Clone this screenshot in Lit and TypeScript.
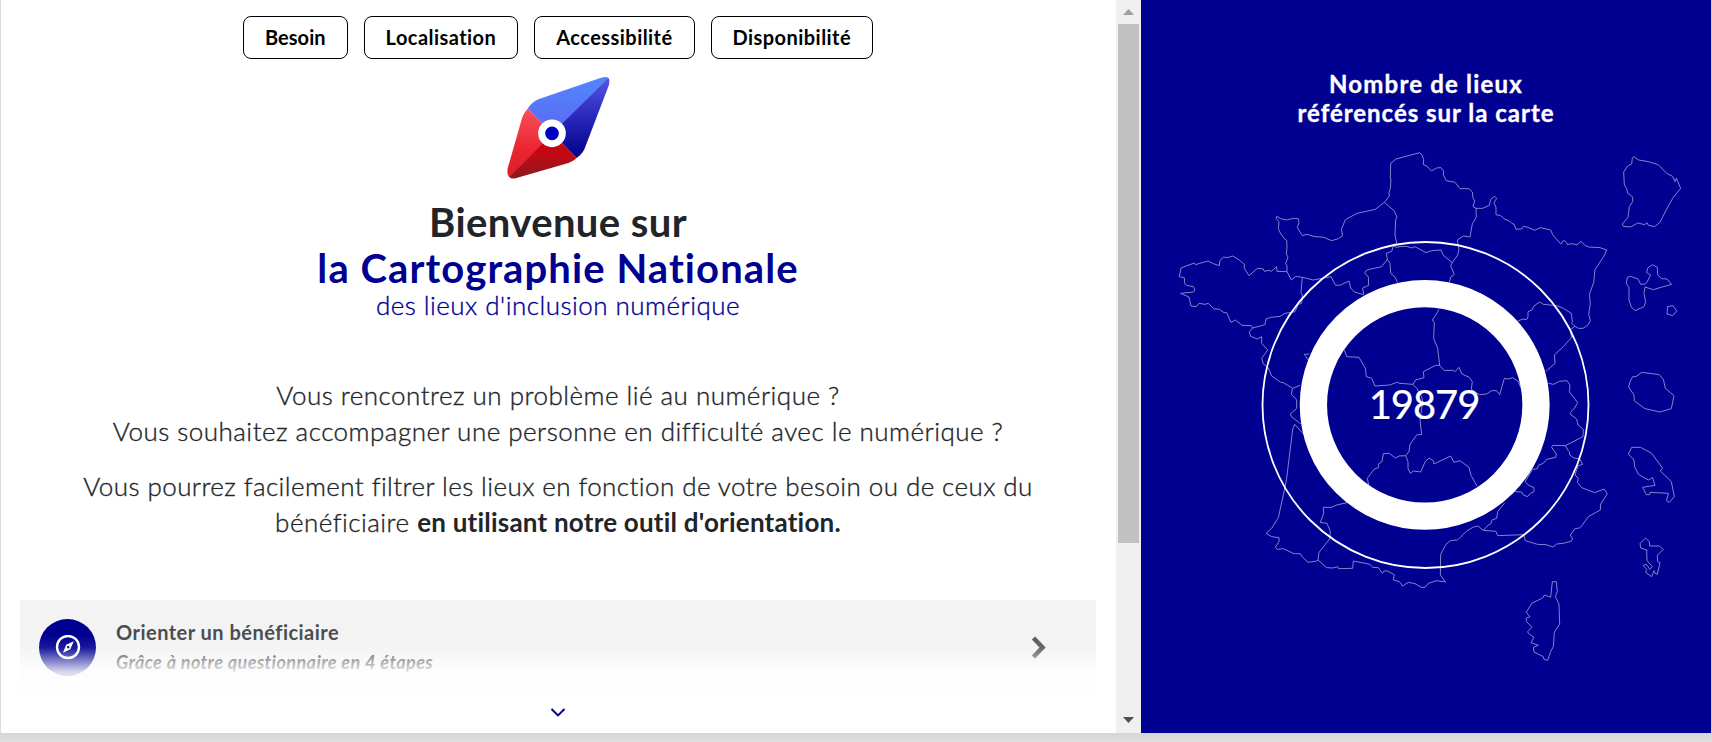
import { LitElement, html, svg, css } from "lit";
import { customElement } from "lit/decorators.js";

const FILTERS = ["Besoin", "Localisation", "Accessibilité", "Disponibilité"];

/* Outlines share a 1/3 px unit; each sheet has its own origin. */
const SHEETS = [
  { dx: 0, dy: 0, d: [
    "M411,425 411,408 407,400 414,382 409,372 411,352 410,331 402,325 391,309 385,296 387,275 379,266 380,259 392,266 410,270 430,265 445,266 447,278 442,293 457,317 471,313 490,319 522,322 545,332 565,326 578,317 574,299 586,269 621,250 676,238 703,217 718,198 717,188 721,175 723,148 721,148 722,100 738,87 809,68",
    "M411,425 381,424 380,410 364,424 357,421 343,424 340,417 322,415 297,437 283,415 283,403 269,391 248,378 232,383 220,381 210,392 208,407 190,401 174,393 136,404 133,399 93,414 88,440 104,444 103,459 110,466 130,470 135,480 130,486 92,490 117,501 123,528 139,530 147,520 165,523 175,520 191,536 208,538 222,548 230,548 243,577 256,570 276,586 304,587 308,594 298,605 302,619 322,627 335,620 335,640 353,660 335,685 340,702 354,712 365,738 392,757 400,758 428,775 450,766",
    "M308,594 345,584 348,567 362,562 390,559 405,550 435,545 445,523 455,520 457,495 453,488 457,442 438,439 424,450 411,425",
    "M457,442 490,450 543,440 557,466 572,465 597,453 602,474 613,486 634,492 641,494 638,474 656,466 655,441 644,429 650,420 695,410 712,388 709,370 725,364 730,348 740,340 735,315 737,270 741,262 733,243 703,217",
    "M712,388 720,400 722,430 735,441 743,458 M730,348 740,352 750,350 M478,672 463,673 475,690",
    "M428,775 424,792 440,810 440,835 421,852 424,860 453,882",
  ] },
  { dx: 750, dy: 0, d: [
    "M59,68 66,75 71,88 70,104 80,108 94,123 110,114 123,113 131,123 130,135 139,152 165,157 180,176 207,176 217,186 219,204 224,213 219,230 228,235 248,235 268,226 272,208 284,199 290,205 282,218 288,232 288,254 302,257 315,268 328,273 336,281 342,282 348,298 366,296 370,289 384,292 404,301 421,293 452,300 458,314 481,341 485,341 487,334 494,332 500,338 502,344 514,341 531,344 543,334 555,346 566,351 600,353 620,360 612,378 585,419 581,458 568,493 571,520 566,553 571,572 563,586 549,595 535,595 525,589 515,580 517,575 514,550 490,535 470,527 430,523 419,516 402,528 397,539 384,545 384,560 380,569 368,567 350,575",
    "M525,589 510,600 515,622 490,650 463,675 465,700 438,724 M445,760 461,763 478,754 501,752 510,765 508,785 533,818 524,834 511,848 511,853 530,867",
    "M0,350 20,349 35,354 45,350 78,368 95,362 123,360 130,376 157,398 173,375 177,360 172,330 190,318 210,321 217,281 229,262 228,235 M157,398 152,407 163,434 153,440 148,457",
    "M117,538 107,556 97,570 103,578 101,625 113,655 119,706 107,706 70,725 72,743 47,750 39,763 50,775 65,800 68,815 60,870",
    "M119,706 132,721 160,721 165,725 177,712 186,732 208,742 217,755 214,778 238,794 260,792 275,782 290,782 299,794 313,745 325,747 338,743 355,754 363,775",
    "M39,763 0,760 -10,757 -30,765 -75,768 -85,745 -101,740 -104,715 -123,682 -160,680 -167,660",
    "M701,80 716,90 745,95 775,104 800,130 818,139 825,155 829,144 842,175 820,202 800,237 780,277 764,290 745,286 741,278 734,284 713,279 692,291 670,289 667,282 684,262 688,230 698,215 698,202 691,194 683,190 680,175 673,165 671,126 683,108 695,102 697,84z",
    "M757,404 772,412 773,435 785,446 801,447 815,463 790,470 760,479 735,471 732,490 737,515 732,530 705,542 694,531 687,510 687,473 679,460 682,442 692,439 714,447 722,463 735,462 740,458 752,435 740,428 743,414z",
    "M803,530 819,527 830,543 818,557 801,552z",
    "M725,727 778,734 790,748 796,775 822,797 814,836 780,846 735,836 703,813 702,795 686,772 690,755 698,740 708,740z",
  ] },
  { dx: 0, dy: 810, d: [
    "M463,105 434,73 428,88 410,235 405,262 385,353 365,385 348,400 365,410 387,413 387,425 376,442 382,448 400,446 432,461 451,461 458,472 474,487 500,483 504,480 530,503 548,504 563,500 566,506 608,505 610,483 660,493 668,502 685,503 697,520 702,513 712,513 733,524 730,540 748,545 758,558",
    "M504,480 507,457 539,417 541,395 531,370 511,367 521,340 520,322 545,322 560,315 591,308",
    "M656,255 652,235 672,208 686,202 685,192 696,185 700,161 718,160 736,174 747,168 767,167 777,155 780,133 801,104 815,104 810,60",
  ] },
  { dx: 750, dy: 810, d: [
    "M530,57 534,75 550,88 549,110 496,137 458,136 455,142 469,162 467,172 440,178 430,190 415,196 412,206 398,208 375,245 385,255 402,263 402,275 391,280 383,290 370,285 365,276 345,275",
    "M496,137 503,150 508,155 509,165 522,174 539,177 548,193 535,197 528,215 525,225 535,235 532,247 545,263 584,278 612,267 622,282 602,312 601,330 565,350 545,378 539,384 525,386 511,405 518,417 513,424 490,430 470,432 459,441 438,434 412,433 376,422 371,404 293,407 288,394 250,391 234,378 221,381 200,393 173,420 151,422 138,433 122,463 121,525 136,546 110,542 85,550 75,562 64,562 45,551 25,547 8,558",
    "M250,391 265,375 272,372 276,360 290,355 293,335 313,310",
    "M17,167 24,185 24,205 31,220 40,213 62,216 75,186 87,174 100,182 102,192 152,168 162,187 180,182 207,202 213,226 232,260",
    "M695,142 722,142 755,160 788,205 780,212 814,245 823,290 808,307 799,302 806,280 750,277 749,284 739,284 728,262 765,256 758,233 745,240 715,223 704,200 702,180 685,162z",
    "M737,414 748,425 749,438 778,438 790,448 772,466 773,485 780,488 775,510 772,523 765,520 762,512 755,530 737,517 740,508 730,497 738,492 750,508 757,500 741,482 740,450 722,444 720,430z",
    "M457,545 469,545 472,575 466,590 477,612 479,672 463,697 460,740 452,755 443,781 432,778 430,770 402,756 400,742 415,736 393,728 402,712 385,700 383,695 396,682 380,665 378,655 390,650 379,637 395,610 428,594 433,585 452,592z",
  ] },
];

@customElement("compass-logo")
export class CompassLogo extends LitElement {
  static styles = css`
    :host { display: block; width: 135px; height: 125px; }
    svg { display: block; width: 100%; height: 100%; }
  `;
  render() {
    return html`<svg viewBox="0 0 405 375">
      <defs>
        <linearGradient id="lb" x1="0" y1="0" x2="0" y2="1"><stop offset="0" stop-color="#5287ff" /><stop offset="1" stop-color="#5b68f2" /></linearGradient>
        <linearGradient id="db" x1="0" y1="0" x2="0" y2="1"><stop offset="0" stop-color="#5355e4" /><stop offset=".5" stop-color="#2727bb" /><stop offset="1" stop-color="#000088" /></linearGradient>
        <linearGradient id="lr" x1="0" y1="0" x2="0" y2="1"><stop offset="0" stop-color="#f9505a" /><stop offset=".6" stop-color="#ea2530" /><stop offset="1" stop-color="#dd1c28" /></linearGradient>
        <linearGradient id="dr" x1="0" y1="0" x2="0" y2="1"><stop offset="0" stop-color="#d2000c" /><stop offset=".5" stop-color="#bf0a14" /><stop offset="1" stop-color="#8c1a20" /></linearGradient>
      </defs>
      <path fill="url(#lb)" d="M113,131 Q124,113 145,103 L331,39 Q351,32 356,40 L186,205z" />
      <path fill="url(#db)" d="M355,39 Q361,46 356,62 L288,240 Q281,265 260,279 L186,205z" />
      <path fill="url(#lr)" d="M113,131 Q98,147 93,170 L53,310 Q50,331 59,337 L186,205z" />
      <path fill="url(#dr)" d="M58,336 Q65,344 82,338 L225,297 Q247,291 260,279 L186,205z" />
      <circle cx="186" cy="205" r="31" fill="#0000c0" stroke="#fff" stroke-width="21" />
    </svg>`;
  }
}

@customElement("france-counter")
export class FranceCounter extends LitElement {
  static styles = css`
    :host { display: block; background: #000091; color: #fff; padding-top: 69px; }
    h2 { margin: 0; font: 700 24px/29px Lato, sans-serif; text-align: center; white-space: nowrap; -webkit-text-stroke: 0.35px #fff; }
    .l1 { letter-spacing: 1.2px; }
    .l2 { letter-spacing: 0.98px; }
    svg { display: block; width: 570px; height: 560px; margin-top: 3px; }
    .line { fill: none; stroke: #8888cc; stroke-width: 2.9; stroke-linejoin: round; }
    .ring { fill: none; stroke: #fff; stroke-width: 27.3; }
    .halo { fill: none; stroke: #fff; stroke-width: 1.8; }
    .num { font: 400 40px Lato, sans-serif; fill: #fff; stroke: #fff; stroke-width: 0.2px; text-anchor: middle; letter-spacing: -1.1px; }
  `;
  render() {
    return html`
      <h2><span class="l1">Nombre de lieux</span><br /><span class="l2">référencés sur la carte</span></h2>
      <svg viewBox="1141 130 570 560">
        ${SHEETS.map((s) => svg`<g transform="translate(1150 130) scale(.33333) translate(${s.dx} ${s.dy})">${s.d.map((d) => svg`<path class="line" d=${d} />`)}</g>`)}
        <circle class="ring" cx="1424.7" cy="404.9" r="111.3" />
        <circle class="halo" cx="1425.5" cy="405" r="163" />
        <text class="num" x="1424" y="418.5">19879</text>
      </svg>`;
  }
}

@customElement("app-root")
export class AppRoot extends LitElement {
  static styles = css`
    :host { display: block; height: 742px; overflow: hidden; background: linear-gradient(#d5d5d5 733px, #e0e0e0 742px); font-family: Lato, sans-serif; color: #212529; }
    * { box-sizing: border-box; }
    .window { display: grid; grid-template-columns: 1115px 25px 570px; width: 1711px; height: 733px; border-left: 1px solid #dedede; background: #fff; }
    .content { display: flex; flex-direction: column; align-items: center; height: 733px; overflow: hidden; padding: 16px 20px 0 19px; position: relative; }
    .filters { display: flex; gap: 16px; }
    .filter { height: 43px; border: 1.5px solid #000; border-radius: 8px; padding: 0 21px 2px; display: grid; place-items: center; font-weight: 700; font-size: 20px; color: #000; letter-spacing: 0.45px; white-space: nowrap; }
    .filter:first-child { letter-spacing: 0.05px; }
    compass-logo { margin-top: 6px; margin-right: 1px; }
    h1 { margin: 9px 0 0; font-weight: 700; font-size: 40px; line-height: 46px; text-align: center; letter-spacing: 0.4px; }
    .name { color: #000091; letter-spacing: 1.08px; }
    .sub { margin-top: -1px; font-weight: 300; font-size: 26px; line-height: 30px; color: #000091; letter-spacing: 0.48px; -webkit-text-stroke: 0.35px #000091; }
    p { margin: 19px 0 0; font-weight: 300; font-size: 26px; line-height: 36px; text-align: center; letter-spacing: 0.48px; white-space: nowrap; -webkit-text-stroke: 0.35px #212529; }
    .intro { margin-top: 57px; }
    .wide { letter-spacing: 0.42px; }
    b { font-weight: 700; letter-spacing: 0.22px; -webkit-text-stroke: 0; }
    .card { align-self: stretch; margin-top: 60px; height: 96px; background: #f3f3f3; display: flex; padding: 19px 48px 19px 19px; flex: none; }
    .badge { width: 57px; height: 57px; border-radius: 50%; background: #000091; display: grid; place-items: center; margin-right: 20px; }
    .texts { flex: 1; color: #494d51; white-space: nowrap; }
    .title { font-weight: 700; font-size: 20px; line-height: 26px; letter-spacing: 0.48px; }
    .desc { font-style: italic; font-weight: 700; font-size: 18px; line-height: 24px; margin-top: 5px; letter-spacing: 0.42px; }
    .next { margin-top: 17px; }
    .fade { position: absolute; left: 0; right: 0; bottom: 0; height: 98px; background: linear-gradient(rgba(255,255,255,0) 0, rgba(255,255,255,.1) 13px, rgba(255,255,255,.45) 24px, rgba(255,255,255,.85) 37px, rgba(255,255,255,.95) 56px, #fff 64px); display: flex; justify-content: center; align-items: flex-end; padding: 0 1px 16px 0; }
    svg { display: block; }
    .bar { background: #f0f0f0; display: flex; flex-direction: column; align-items: center; padding: 9px 0 10px; }
    .thumb { width: 21px; height: 519px; background: #c1c1c1; margin-top: 9px; margin-bottom: auto; }
  `;
  render() {
    return html`<div class="window">
      <div class="content">
        <div class="filters">${FILTERS.map((f) => html`<div class="filter">${f}</div>`)}</div>
        <compass-logo></compass-logo>
        <h1>Bienvenue sur<br /><span class="name">la Cartographie Nationale</span></h1>
        <div class="sub">des lieux d'inclusion numérique</div>
        <p class="intro">Vous rencontrez un problème lié au numérique ?<br />Vous souhaitez accompagner une personne en difficulté avec le numérique ?</p>
        <p><span class="wide">Vous pourrez facilement filtrer les lieux en fonction de votre besoin ou de ceux du</span><br />bénéficiaire <b>en utilisant notre outil d'orientation.</b></p>
        <div class="card">
          <div class="badge">
            <svg width="26" height="26" viewBox="0 0 26 26"><circle cx="13" cy="12" r="11" fill="none" stroke="#fff" stroke-width="2.4" /><path fill="#fff" fill-rule="evenodd" d="M18.8 6.2 15.3 14.2 8 17.8 11.2 9.8z M13.2 10.8a1.3 1.3 0 1 0 .01 0z" /></svg>
          </div>
          <div class="texts"><div class="title">Orienter un bénéficiaire</div><div class="desc">Grâce à notre questionnaire en 4 étapes</div></div>
          <svg class="next" width="18" height="24" viewBox="0 0 18 24"><path d="M3.5 2 12.5 11.5 3.5 21" fill="none" stroke="#55585c" stroke-width="4.6" /></svg>
        </div>
        <div class="fade"><svg width="16" height="9" viewBox="0 0 16 9"><path d="M1.5 1 8 7.4 14.5 1" fill="none" stroke="#000091" stroke-width="2" /></svg></div>
      </div>
      <div class="bar">
        <svg width="11" height="6" viewBox="0 0 11 6"><path d="M0 6 5.5 0 11 6z" fill="#a0a0a0" /></svg>
        <div class="thumb"></div>
        <svg width="11" height="6" viewBox="0 0 11 6"><path d="M0 0H11L5.5 6z" fill="#505050" /></svg>
      </div>
      <france-counter></france-counter>
    </div>`;
  }
}
